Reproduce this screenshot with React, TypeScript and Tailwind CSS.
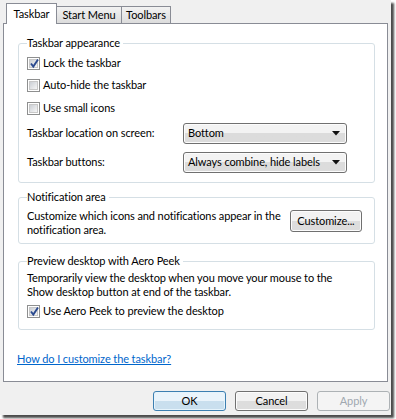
import React from 'react';

const font = { fontFamily: 'Lato, "Noto Sans", sans-serif' };

const Check = ({ checked }: { checked?: boolean }) => (
  <span className="relative flex h-[13px] w-[13px] shrink-0 items-center justify-center border border-[#8e8f8f] bg-white">
    <span className="h-[9px] w-[9px] border border-[#c8c8c8] bg-gradient-to-br from-[#cbcfd5] to-[#f6f6f6]" />
    {checked && (
      <svg className="absolute left-[1px] top-[0px]" width="11" height="11" viewBox="0 0 11 11">
        <path d="M2 5.5 L4.3 8.5 L9 1.5" fill="none" stroke="#2b4a8f" strokeWidth="1.9" />
      </svg>
    )}
  </span>
);

const Select = ({ value }: { value: string }) => (
  <div className="flex h-[21px] w-[164px] items-center justify-between whitespace-nowrap rounded-[3px] border border-[#707070] bg-gradient-to-b from-[#f3f3f3] from-50% to-[#dcdcdc] to-50% pl-[4px] pr-[6px] shadow-[inset_0_0_0_1px_#fcfcfc]">
    <span>{value}</span>
    <svg width="8" height="5" viewBox="0 0 8 5">
      <path d="M0 0 H8 L4 4.5 Z" fill="#111" />
    </svg>
  </div>
);

const Group = ({ title, className, children }: { title: string; className: string; children: React.ReactNode }) => (
  <div className={`relative ml-[14px] w-[357px] rounded-[3px] border border-[#d5dfe5] ${className}`}>
    <span className="absolute left-[8px] top-[-9px] bg-white pr-[3px] leading-[16px]">{title}</span>
    {children}
  </div>
);

export default function App() {
  return (
    <div className="h-[419px] w-[396px] bg-white text-[11px] tracking-[-0.1px] text-black" style={font}>
      <div className="h-[415px] w-[391px] bg-[#f0f0f0] pl-[3px] pt-[3px] shadow-[3px_3px_2px_rgba(0,0,0,0.7)]">
        {/* tabs */}
        <div className="flex h-[21px] items-end pl-[3px]">
          <div className="relative z-10 flex h-[21px] w-[51px] items-start justify-center border border-b-0 border-[#898c95] bg-white pt-[2px] leading-[16px]">
            Taskbar
          </div>
          <div className="flex h-[18px] w-[65px] items-center justify-center border border-l-0 border-[#898c95] bg-gradient-to-b from-[#f2f2f2] to-[#dcdcdc] leading-[16px]">
            Start Menu
          </div>
          <div className="flex h-[18px] w-[49px] items-center justify-center border border-l-0 border-[#898c95] bg-gradient-to-b from-[#f2f2f2] to-[#dcdcdc] leading-[16px]">
            Toolbars
          </div>
        </div>

        {/* panel */}
        <div className="mt-[-1px] h-[359px] w-[385px] border border-[#898c95] bg-white">
          <Group title="Taskbar appearance" className="mt-[19px] h-[140px] px-[8px] pt-[11px]">
            <label className="flex h-[16px] items-center gap-[3px]">
              <Check checked />
              <span>Lock the taskbar</span>
            </label>
            <label className="mt-[6px] flex h-[16px] items-center gap-[3px]">
              <Check />
              <span>Auto-hide the taskbar</span>
            </label>
            <label className="mt-[7px] flex h-[16px] items-center gap-[3px]">
              <Check />
              <span>Use small icons</span>
            </label>
            <div className="mt-[7px] flex items-center">
              <span className="w-[156px]">Taskbar location on screen:</span>
              <Select value="Bottom" />
            </div>
            <div className="mt-[8px] flex items-center">
              <span className="w-[156px]">Taskbar buttons:</span>
              <Select value="Always combine, hide labels" />
            </div>
          </Group>

          <Group title="Notification area" className="mt-[14px] h-[47px] pl-[8px] pt-[11px]">
            <div className="flex items-start">
              <p className="w-[263px] whitespace-nowrap leading-[14px]">
                Customize which icons and notifications appear in the
                <br />
                notification area.
              </p>
              <button className="mt-[1px] flex h-[22px] w-[72px] items-center justify-center rounded-[3px] border border-[#707070] bg-gradient-to-b from-[#f2f2f2] from-50% to-[#dddddd] to-50% shadow-[inset_0_0_0_1px_#fcfcfc]">
                Customize...
              </button>
            </div>
          </Group>

          <Group title="Preview desktop with Aero Peek" className="mt-[17px] h-[69px] pl-[8px] pt-[9px]">
            <p className="whitespace-nowrap leading-[14px]">
              Temporarily view the desktop when you move your mouse to the
              <br />
              Show desktop button at end of the taskbar.
            </p>
            <label className="mt-[4px] flex h-[16px] items-center gap-[3px]">
              <Check checked />
              <span>Use Aero Peek to preview the desktop</span>
            </label>
          </Group>

          <div className="ml-[13px] mt-[21px] leading-[16px]">
            <a className="text-[#0066cc] underline">How do I customize the taskbar?</a>
          </div>
        </div>

        {/* buttons */}
        <div className="mt-[9px] flex justify-end gap-[9px] pr-[1px]">
          <button className="flex h-[20px] w-[73px] items-center justify-center rounded-[3px] border border-[#3c7fb1] bg-gradient-to-b from-[#eaf4fb] from-50% to-[#c9dfee] to-50% shadow-[inset_0_0_0_1px_#e6f4fc]">
            OK
          </button>
          <button className="flex h-[20px] w-[73px] items-center justify-center rounded-[3px] border border-[#707070] bg-gradient-to-b from-[#f2f2f2] from-50% to-[#dddddd] to-50% shadow-[inset_0_0_0_1px_#fcfcfc]">
            Cancel
          </button>
          <button className="flex h-[20px] w-[73px] items-center justify-center rounded-[3px] border border-[#adb2b5] bg-[#f4f4f4] text-[#a0a8b0]">
            Apply
          </button>
        </div>
      </div>
    </div>
  );
}
